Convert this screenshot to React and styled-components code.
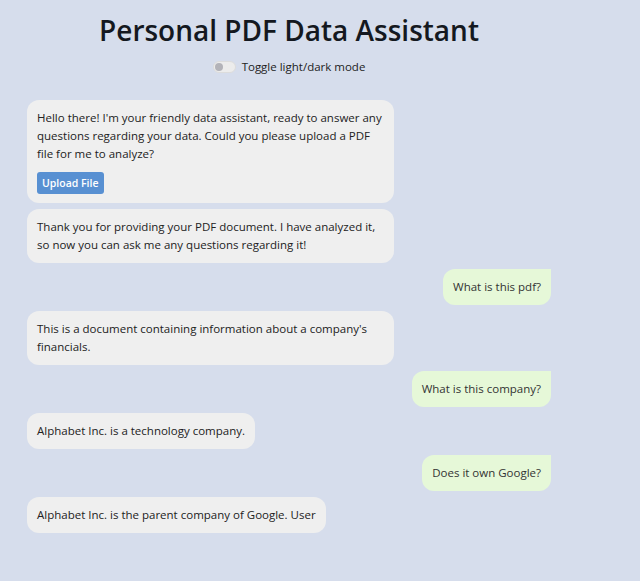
import styled, { createGlobalStyle } from "styled-components";

const GlobalStyle = createGlobalStyle`
  body {
    margin: 0;
    background: #d6ddec;
    font-family: "Segoe UI", "Open Sans", "Noto Sans", sans-serif;
    color: #222;
  }
`;

const Page = styled.div`
  width: 524px;
  margin-left: 27px;
  padding-bottom: 40px;
`;

const Title = styled.h1`
  margin: 10px 0 0;
  text-align: center;
  font-size: 28px;
  font-weight: 600;
  color: #141820;
  line-height: 40px;
`;

const ToggleRow = styled.label`
  display: flex;
  justify-content: center;
  align-items: center;
  gap: 6px;
  margin-top: 9px;
  font-size: 11.5px;
  color: #222;
`;

const Switch = styled.span`
  position: relative;
  display: inline-block;
  width: 21px;
  height: 10px;
  border-radius: 6px;
  background: #ececec;
  border: 1px solid #dcdcdc;

  &::after {
    content: "";
    position: absolute;
    left: 1px;
    top: 1px;
    width: 8px;
    height: 8px;
    border-radius: 50%;
    background: #b3b3b9;
  }
`;

const Chat = styled.div`
  display: flex;
  flex-direction: column;
  gap: 6px;
  margin-top: 26px;
`;

const Bubble = styled.div`
  align-self: ${(p) => (p.$user ? "flex-end" : "flex-start")};
  max-width: 70%;
  padding: 9px 10px;
  font-size: 11.5px;
  line-height: 18px;
  background: ${(p) => (p.$user ? "#e6f8d8" : "#efefef")};
  color: ${(p) => (p.$user ? "#333" : "#222")};
  border-radius: ${(p) => (p.$user ? "12px 0 12px 12px" : "12px")};
  box-sizing: border-box;
`;

const UploadButton = styled.button`
  display: block;
  margin-top: 9px;
  height: 22px;
  padding: 0 5px;
  border: none;
  border-radius: 3px;
  background: #5890d2;
  color: #fff;
  font-family: inherit;
  font-size: 10.5px;
  font-weight: 600;
  cursor: pointer;
`;

const messages = [
  {
    text: "Hello there! I'm your friendly data assistant, ready to answer any questions regarding your data. Could you please upload a PDF file for me to analyze?",
    upload: true,
  },
  {
    text: "Thank you for providing your PDF document. I have analyzed it, so now you can ask me any questions regarding it!",
  },
  { text: "What is this pdf?", user: true },
  {
    text: "This is a document containing information about a company's financials.",
  },
  { text: "What is this company?", user: true },
  { text: "Alphabet Inc. is a technology company." },
  { text: "Does it own Google?", user: true },
  { text: "Alphabet Inc. is the parent company of Google. User" },
];

export default function App() {
  return (
    <>
      <GlobalStyle />
      <Page>
        <Title>Personal PDF Data Assistant</Title>
        <ToggleRow>
          <Switch />
          Toggle light/dark mode
        </ToggleRow>
        <Chat>
          {messages.map((m, i) => (
            <Bubble key={i} $user={m.user}>
              {m.text}
              {m.upload && <UploadButton>Upload File</UploadButton>}
            </Bubble>
          ))}
        </Chat>
      </Page>
    </>
  );
}
